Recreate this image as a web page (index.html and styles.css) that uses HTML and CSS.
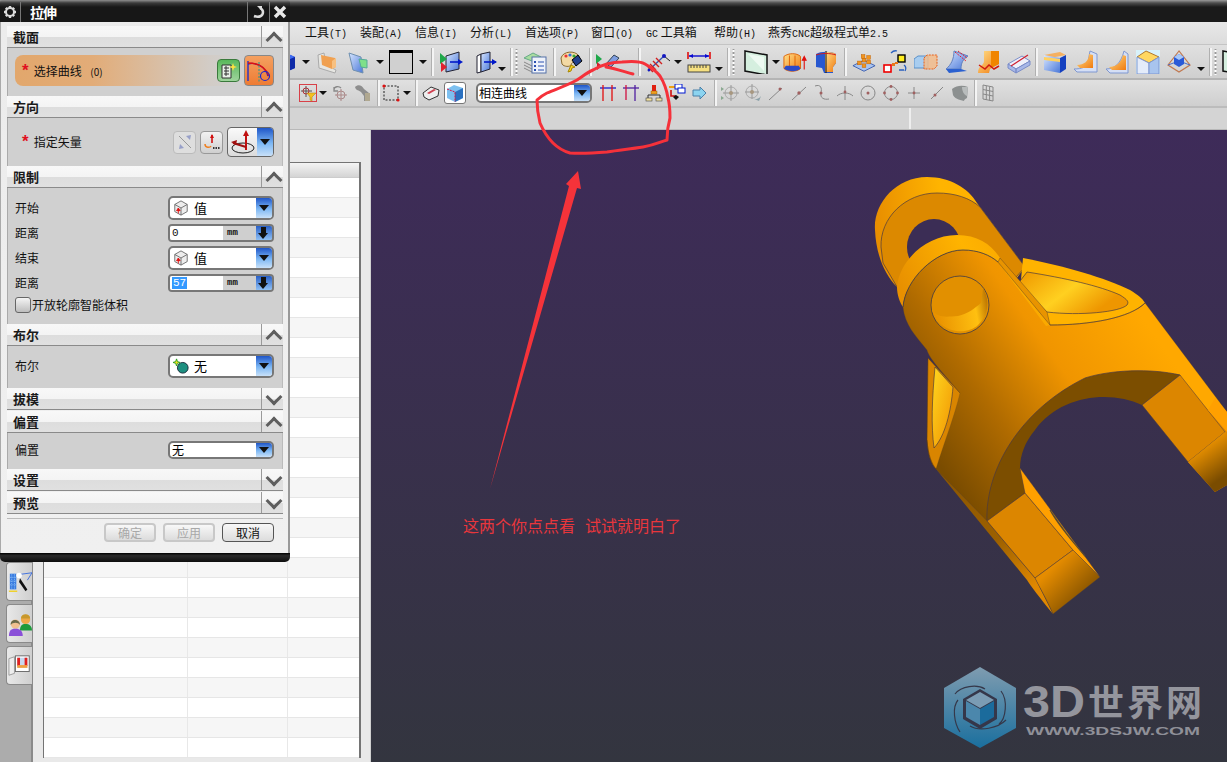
FILE: index.html
```html
<!DOCTYPE html>
<html lang="zh">
<head>
<meta charset="utf-8">
<title>拉伸</title>
<link rel="stylesheet" href="styles.css">
</head>
<body>
<svg class="sprite" width="0" height="0">
<defs>
<linearGradient id="gBlue" x1="0" y1="0" x2="1" y2="1"><stop offset="0" stop-color="#d8e6ff"/><stop offset="1" stop-color="#4a78d8"/></linearGradient>
<linearGradient id="gOr" x1="0" y1="0" x2="1" y2="1"><stop offset="0" stop-color="#ffe08a"/><stop offset="1" stop-color="#f07a10"/></linearGradient>
<symbol id="i-cube" viewBox="0 0 24 24"><path d="M3 7l9-4 9 4v11l-9 4-9-4z" fill="#1c3fd8"/><path d="M3 7l9-4 9 4-9 4z" fill="#3f6cf0"/><path d="M12 11v11l9-4V7z" fill="#0e2aa8"/></symbol>
<symbol id="i-boxo" viewBox="0 0 24 24"><path d="M3 5l6-2 2 12 10 5-1 3-16-5z" fill="#e6e6e2" stroke="#aaa"/><path d="M6 5l14 3 1 9-4 2-10-4z" fill="#f0a050"/><path d="M17 11l4-3v9l-4 2z" fill="#f7c080"/></symbol>
<symbol id="i-paneg" viewBox="0 0 24 24"><path d="M3 3l12 4 2 16-10-3z" fill="url(#gBlue)" stroke="#6e8fb0"/><path d="M13 9l8 1v8l-6-1z" fill="#7fe08a" stroke="#5a9"/></symbol>
<symbol id="i-frame" viewBox="0 0 24 24"><rect x="0.5" y="0.5" width="23" height="23" fill="#d0d0d0" stroke="#000"/><rect x="0" y="0" width="24" height="3" fill="#000"/></symbol>
<symbol id="i-af1" viewBox="0 0 24 24"><path d="M7 6l13-4v17l-13 3z" fill="url(#gBlue)" stroke="#223"/><path d="M1 3l7 6-7 5z" fill="#1fa84a"/><path d="M2 12l6 5-6 5z" fill="#e02030"/><path d="M11 12h11" stroke="#0018c8" stroke-width="1.6"/><path d="M19 9l5 3-5 3z" fill="#0018c8"/></symbol>
<symbol id="i-af2" viewBox="0 0 24 24"><path d="M3 6l4-2v18l-4 1z" fill="#fff" stroke="#223"/><path d="M7 4l9-2v17l-9 3z" fill="url(#gBlue)" stroke="#223"/><path d="M10 12h12" stroke="#0018c8" stroke-width="1.6"/><path d="M18 9l5 3-5 3z" fill="#0018c8"/></symbol>
<symbol id="i-list" viewBox="0 0 24 24"><path d="M1 8l9-5 8 4-9 4z" fill="#a9dca0" stroke="#6a8"/><path d="M1 12l8 4M1 15l8 4M1 18l8 4" stroke="#888" fill="none"/><rect x="9" y="7" width="14" height="16" fill="#eef2fa" stroke="#5570a8"/><path d="M11 11h2v2h-2zM11 15h2v2h-2zM11 19h2v2h-2z" fill="#2a50b0"/><path d="M15 12h6M15 16h6M15 20h6" stroke="#2a50b0"/></symbol>
<symbol id="i-pal" viewBox="0 0 24 24"><path d="M2 8c2-7 14-8 18-2 2 5-8 5-8 9-1 2-7 2-9-1z" fill="#f3d9a4" stroke="#8a6a30"/><circle cx="7" cy="6" r="1.6" fill="#e33"/><circle cx="11" cy="5" r="1.6" fill="#2c6de0"/><circle cx="15" cy="6" r="1.6" fill="#3a3"/><path d="M13 10l6-5 4 6-6 5z" fill="#20408c" stroke="#000"/><path d="M12 15l-3 7 3-1 1-3 3-1z" fill="#f5d020" stroke="#a80"/></symbol>
<symbol id="i-play" viewBox="0 0 30 24"><path d="M0 4l6 5-6 5z" fill="#1fa84a"/><path d="M1 12l5 4-5 4z" fill="#d02030"/><path d="M10 14l8-9 5 3-8 9z" fill="#7f9ee0" stroke="#345"/></symbol>
<symbol id="i-ant" viewBox="0 0 24 24"><path d="M2 21L18 6" stroke="#3050b0" stroke-width="1.2"/><path d="M18 6l6 5" stroke="#222"/><circle cx="18" cy="6" r="2" fill="#1418c0"/><path d="M4 14l6 6M7 11l6 6M10 8l6 6M2 17l5 5" stroke="#d02020" stroke-width="1.4"/><circle cx="3" cy="20" r="1.4" fill="#1418c0"/></symbol>
<symbol id="i-rule" viewBox="0 0 24 24"><path d="M1 2v7M23 2v7" stroke="#e01010" stroke-width="1.6"/><path d="M2 6h20" stroke="#0a0ad0" stroke-width="1.4"/><path d="M2 6l4-2v4zM22 6l-4-2v4z" fill="#0a0ad0"/><rect x="1" y="15" width="22" height="7" fill="#f6e080" stroke="#444"/><path d="M4 15v3M7 15v3M10 15v3M13 15v3M16 15v3M19 15v3" stroke="#444"/></symbol>
<symbol id="i-pane" viewBox="0 0 24 24"><path d="M1 1l22 4v20L1 21z" fill="#d5efdf" stroke="#111" stroke-width="1.5"/><path d="M4 4l16 3v14z" fill="#eefaf2"/></symbol>
<symbol id="i-exo" viewBox="0 0 26 24"><path d="M1 6c5-4 14-4 18 0v13c-4 4-14 4-18 0z" fill="url(#gOr)" stroke="#e06000"/><path d="M7 5v16M13 5v16" stroke="#e06000"/><path d="M1 19c5 4 14 4 18 0l-2-3H3z" fill="#2c4ac8"/><path d="M23 8v12M23 6l-2 4h4z" stroke="#e01010" fill="#e01010" stroke-width="1.2"/></symbol>
<symbol id="i-exb" viewBox="0 0 24 24"><path d="M2 4c5-3 15-3 20 0v9l-3 4v6H10l-2-5-6-1z" fill="#2858d0"/><path d="M11 2c4 0 8 0 11 2v9l-3 4v5h-8z" fill="url(#gOr)"/><path d="M12 1v22" stroke="#111"/><path d="M2 5c5-2 15-2 20 0" stroke="#d02020" fill="none"/></symbol>
<symbol id="i-pads" viewBox="0 0 26 24"><path d="M1 16l12-6 12 6-12 6z" fill="#aac4ee" stroke="#3a5db0"/><g fill="#f0941e" stroke="#c06000" stroke-width=".5"><rect x="6" y="11" width="4" height="4"/><rect x="11" y="8" width="4" height="4"/><rect x="16" y="10" width="4" height="4"/><rect x="11" y="14" width="4" height="4"/><rect x="16" y="5" width="4" height="4"/><rect x="10" y="4" width="4" height="4"/></g></symbol>
<symbol id="i-pts" viewBox="0 0 24 24"><rect x="15" y="5" width="7" height="7" fill="#ffee20" stroke="#000" stroke-width="1.4"/><rect x="1" y="15" width="7" height="7" fill="#fff" stroke="#e00" stroke-width="1.6"/><rect x="9" y="13" width="3" height="3" fill="#e8761a"/><rect x="12" y="12" width="3" height="2" fill="#e8761a"/><path d="M8 3q3-3 6-2M21 15q3 2 1 6M16 20h5" stroke="#2a60c0" fill="none" stroke-width="1.3"/></symbol>
<symbol id="i-boxes" viewBox="0 0 24 24"><path d="M0 9l4-3h10v12H0z" fill="#a8cdf0" stroke="#5a90c8"/><path d="M10 8l3-3h10v11l-3 3H10z" fill="#f2bc8c" fill-opacity=".85" stroke="#e8601a" stroke-dasharray="2 1"/></symbol>
<symbol id="i-sweep" viewBox="0 0 24 24"><path d="M9 1l14 5c-5 3-7 7-7 13L1 19c5-4 8-10 8-18z" fill="url(#gBlue)" stroke="#6080c0"/><path d="M10 2l11 9M13 1l9 7" stroke="#e02030" stroke-dasharray="2 1"/><path d="M1 19l15 0 6 2-18 2z" fill="#2a60d0"/></symbol>
<symbol id="i-fold" viewBox="0 0 24 24"><path d="M8 1h15v13l-9 5-1 4H2c0-8 6-7 6-12z" fill="url(#gOr)"/><path d="M15 1h8v13l-8 4z" fill="#f08500"/><path d="M3 15l6 4 4-4 5 4 5-3" stroke="#d01a10" stroke-width="1.5" fill="none"/></symbol>
<symbol id="i-slab" viewBox="0 0 24 24"><path d="M1 14l14-8 8 5-14 8z" fill="#eef0fa" stroke="#7a8cc8"/><path d="M1 14v4l8 5v-4zM9 19v4l14-8v-4z" fill="#a8b8e8" stroke="#7a8cc8"/><path d="M4 16L21 5" stroke="#d02030" stroke-width="1.2"/></symbol>
<symbol id="i-boxt" viewBox="0 0 24 24"><path d="M1 5l16-3 6 3-16 3z" fill="#f5b060"/><path d="M1 5l16 3v15L1 20z" fill="url(#gBlue)"/><path d="M1 7l16 2v3L1 10z" fill="#ffd060"/><path d="M17 8l6-3v14l-6 4z" fill="#1440c0"/></symbol>
<symbol id="i-bend1" viewBox="0 0 24 24"><path d="M16 1l7 3v18H3l-3-3c8 0 13-2 14-7z" fill="#d5dff5" stroke="#7f97d0"/><path d="M15 4l4 1v13H6l-3-3c7 0 12-4 12-11z" fill="url(#gOr)"/></symbol>
<symbol id="i-bend2" viewBox="0 0 24 24"><path d="M19 1l4 3v19H5l-4-4c9 0 15-6 18-18z" fill="#d5dff5" stroke="#7f97d0"/><path d="M18 5l3 1v14H7l-3-3c7 0 12-4 14-12z" fill="url(#gOr)"/></symbol>
<symbol id="i-box2" viewBox="0 0 24 24"><rect width="24" height="24" fill="#d8f2fa"/><path d="M1 7l9-6 13 6-10 6z" fill="#ffd860" stroke="#b07a30"/><path d="M2 9l11 5" stroke="#d06010" stroke-width="1.5"/><path d="M1 7l12 6v11H1z" fill="#e4ecfa" stroke="#7f97d0"/><path d="M13 13l10-6v17H13z" fill="#a8c4ee" stroke="#7f97d0"/></symbol>
<symbol id="i-cubep" viewBox="0 0 24 24"><path d="M12 1L1 15l11 7 11-7z" fill="none" stroke="#c07850" stroke-width="1.2"/><path d="M1 15l11-4 11 4" stroke="#4a6cc8" fill="none"/><path d="M7 7l5-3 5 3v7l-5 3-5-3z" fill="#2a5ad8"/><path d="M7 7l5-3 5 3-5 3z" fill="#a8c8f8"/></symbol>
<symbol id="i-filt" viewBox="0 0 18 18"><rect x=".5" y=".5" width="17" height="17" fill="none" stroke="#d84048"/><path d="M7 2v11M2 7h11" stroke="#555"/><circle cx="7" cy="7" r="3" fill="none" stroke="#b03038"/><path d="M8 9h9l-4 4v4l-2-1v-3z" fill="#f5c020" stroke="#a88010" stroke-width=".5"/></symbol>
<symbol id="i-tgt" viewBox="0 0 18 18"><circle cx="10" cy="11" r="4" fill="none" stroke="#a88"/><path d="M10 5v12M4 11h12" stroke="#a88"/><path d="M3 6c0-4 5-4 7-2M3 3v4h4" stroke="#888" fill="none" stroke-width="1.3"/></symbol>
<symbol id="i-pipe" viewBox="0 0 18 18"><path d="M1 3c3-3 7-2 9 2l5 4v8h-5v-5L7 8C5 6 2 7 1 3z" fill="#8e8e8e"/><rect x="11" y="9" width="5" height="8" fill="#b0a890"/></symbol>
<symbol id="i-dash" viewBox="0 0 18 18"><rect x="2" y="2" width="14" height="14" fill="none" stroke="#222" stroke-dasharray="2 1.5"/><circle cx="2" cy="2" r="1.6" fill="#e01010"/><circle cx="16" cy="16" r="1.6" fill="#e01010"/></symbol>
<symbol id="i-tbox" viewBox="0 0 18 18"><path d="M1 9l8-6 8 3-1 6-9 4-5-3z" fill="#eee" stroke="#333"/><path d="M5 9l7-4 2 1-7 4z" fill="#d04050"/></symbol>
<symbol id="i-acube" viewBox="0 0 18 18"><path d="M1 5l7-4 9 3v10l-8 4-8-4z" fill="#7cc0f0"/><path d="M9 8l8-4v10l-8 4z" fill="#2a70c0"/><path d="M1 5l8 3v10" fill="none" stroke="#e01040" stroke-dasharray="2 1"/></symbol>
<symbol id="i-t1" viewBox="0 0 18 18"><path d="M1 4h16" stroke="#1a1ad0" stroke-width="1.3"/><path d="M4 1v16M13 1v16" stroke="#e01010" stroke-width="1.3"/></symbol>
<symbol id="i-t2" viewBox="0 0 18 18"><path d="M1 4h16" stroke="#5020a0" stroke-width="1.3"/><path d="M4 1v15" stroke="#d01040" stroke-width="1.3"/><path d="M13 1v16" stroke="#5020a0" stroke-width="1.3"/></symbol>
<symbol id="i-org" viewBox="0 0 18 18"><rect x="7" y="1" width="4" height="6" fill="#e02010"/><rect x="6" y="7" width="6" height="3" fill="#f0a020" stroke="#805000" stroke-width=".4"/><path d="M3 14v-3h12v3" fill="none" stroke="#333"/><rect x="1" y="14" width="6" height="3" fill="#f0e0a0" stroke="#444" stroke-width=".6"/><rect x="11" y="14" width="6" height="3" fill="#f0e0a0" stroke="#444" stroke-width=".6"/></symbol>
<symbol id="i-flow" viewBox="0 0 18 18"><path d="M1 3h6" stroke="#f0a010" stroke-width="2"/><rect x="7" y="0" width="7" height="5" fill="#fff" stroke="#0018d0"/><rect x="10" y="4" width="7" height="5" fill="#fff" stroke="#0018d0"/><path d="M3 6v6h5" stroke="#d01010" stroke-width="1.6" fill="none"/><path d="M5 13l3-2 3 2-3 3z" fill="#111"/></symbol>
<symbol id="i-next" viewBox="0 0 18 18"><path d="M2 6h7V3l6 6-6 6v-3H2z" fill="#8cd4f0" stroke="#4a80a8"/></symbol>
<symbol id="i-g1" viewBox="0 0 18 18"><circle cx="10" cy="9" r="6" fill="none" stroke="#aaa"/><path d="M10 1v16M2 9h16" stroke="#999"/><circle cx="10" cy="9" r="2" fill="#a89880"/><path d="M0 3l3 2-3 2zM0 12l3 2-3 2z" fill="#8aa890"/></symbol>
<symbol id="i-g2" viewBox="0 0 18 18"><circle cx="8" cy="8" r="6" fill="none" stroke="#aaa"/><path d="M8 0v15M1 8h14" stroke="#999"/><circle cx="8" cy="8" r="2" fill="#a89880"/><path d="M8 14q6 3 9-2l-2 5z" fill="#8aa0a8"/></symbol>
<symbol id="i-g3" viewBox="0 0 18 18"><path d="M2 16L15 4" stroke="#888"/><circle cx="13" cy="5" r="1.5" fill="#a06060"/></symbol>
<symbol id="i-g4" viewBox="0 0 18 18"><path d="M2 16L16 3" stroke="#888"/><circle cx="9" cy="9" r="1.7" fill="#a06060"/></symbol>
<symbol id="i-g5" viewBox="0 0 18 18"><path d="M2 2c6-2 7 2 6 7-1 5 3 7 8 6" stroke="#888" fill="none"/><circle cx="8" cy="9" r="1.5" fill="#a06060"/></symbol>
<symbol id="i-g6" viewBox="0 0 18 18"><path d="M1 12c4-4 12-4 16 0M9 2v14" stroke="#888" fill="none"/><circle cx="9" cy="8" r="1.4" fill="#a06060"/></symbol>
<symbol id="i-g7" viewBox="0 0 18 18"><circle cx="9" cy="9" r="7" stroke="#888" fill="none"/><circle cx="9" cy="9" r="1.5" fill="#a06060"/></symbol>
<symbol id="i-g8" viewBox="0 0 18 18"><circle cx="9" cy="9" r="6.5" stroke="#888" fill="none"/><g fill="#a06060"><circle cx="9" cy="2.5" r="1.4"/><circle cx="9" cy="15.5" r="1.4"/><circle cx="2.5" cy="9" r="1.4"/><circle cx="15.5" cy="9" r="1.4"/></g></symbol>
<symbol id="i-g9" viewBox="0 0 18 18"><path d="M9 3v12M3 9h12" stroke="#888"/><circle cx="9" cy="9" r="1.4" fill="#a06060"/></symbol>
<symbol id="i-g10" viewBox="0 0 18 18"><path d="M3 15L15 3" stroke="#888"/><circle cx="7" cy="11" r="1.5" fill="#a06060"/></symbol>
<symbol id="i-g11" viewBox="0 0 18 18"><path d="M1 5c5-4 11-4 16-2l-1 11c-2 1-3 2-3 3-5-1-10-3-11-6z" fill="#8c9090"/><path d="M11 3l6 0-1 9c-3-1-5-5-5-9z" fill="#b8bcbc"/></symbol>
<symbol id="i-grid" viewBox="0 0 18 18"><path d="M4 1l10 2v14L4 15zM4 5.500l10 2M4 10l10 2M7.300 2v14M10.600 2.500v14" fill="none" stroke="#888"/></symbol>
<symbol id="i-cubesm" viewBox="0 0 18 18"><path d="M2 5l7-4 7 4v8l-7 4-7-4z" fill="#ececec" stroke="#666"/><path d="M2 5l7 4 7-4M9 9v8" stroke="#666" fill="none"/><path d="M6 15v-5M6 9l-2 3h4z" stroke="#e01010" fill="#e01010"/></symbol>
</defs>
</svg>

<div class="app">
  <div class="titlebar"></div>
  <nav class="menubar">
    <span class="menu m-tools">工具<i>(T)</i></span>
    <span class="menu">装配<i>(A)</i></span>
    <span class="menu">信息<i>(I)</i></span>
    <span class="menu">分析<i>(L)</i></span>
    <span class="menu">首选项<i>(P)</i></span>
    <span class="menu">窗口<i>(O)</i></span>
    <span class="menu"><i>GC</i> 工具箱</span>
    <span class="menu">帮助<i>(H)</i></span>
    <span class="menu">燕秀<i>CNC</i>超级程式单<i>2.5</i></span>
  </nav>
  <div class="toolbar t1">
    <span class="s"><svg><use href="#i-cube"/></svg></span><b class="c"></b>
    <span class="s"><svg><use href="#i-boxo"/></svg></span>
    <span class="s"><svg><use href="#i-paneg"/></svg></span><b class="c g2"></b>
    <span class="s"><svg><use href="#i-frame"/></svg></span><b class="c g2"></b><u class="sep"></u>
    <span class="s"><svg><use href="#i-af1"/></svg></span>
    <span class="s g4"><svg><use href="#i-af2"/></svg></span><b class="c n4 low"></b><u class="sep"></u><em class="grip"></em>
    <span class="s"><svg><use href="#i-list"/></svg></span><u class="sep"></u>
    <span class="s n2"><svg><use href="#i-pal"/></svg></span><u class="sep"></u>
    <span class="s g2"><svg class="wide"><use href="#i-play"/></svg></span><u class="sep g9"></u>
    <span class="s"><svg><use href="#i-ant"/></svg></span><b class="c"></b>
    <span class="s"><svg><use href="#i-rule"/></svg></span><b class="c low"></b><u class="sep"></u><em class="grip"></em>
    <span class="s g4"><svg><use href="#i-pane"/></svg></span><b class="c"></b>
    <span class="s n2"><svg><use href="#i-exo"/></svg></span>
    <span class="s"><svg><use href="#i-exb"/></svg></span><u class="sep"></u>
    <span class="s"><svg><use href="#i-pads"/></svg></span>
    <span class="s"><svg><use href="#i-pts"/></svg></span>
    <span class="s"><svg><use href="#i-boxes"/></svg></span>
    <span class="s"><svg><use href="#i-sweep"/></svg></span>
    <span class="s"><svg><use href="#i-fold"/></svg></span>
    <span class="s"><svg><use href="#i-slab"/></svg></span><u class="sep n2"></u>
    <span class="s"><svg><use href="#i-boxt"/></svg></span>
    <span class="s"><svg><use href="#i-bend1"/></svg></span>
    <span class="s"><svg><use href="#i-bend2"/></svg></span>
    <span class="s"><svg><use href="#i-box2"/></svg></span>
    <span class="s"><svg><use href="#i-cubep"/></svg></span><b class="c g2 low"></b><u class="sep"></u><em class="grip"></em>
    <span class="s"><svg><use href="#i-pane"/></svg></span>
  </div>
  <div class="toolbar t2">
    <span class="s2 lead"><svg><use href="#i-filt"/></svg></span><b class="c n1"></b>
    <span class="s2"><svg><use href="#i-tgt"/></svg></span>
    <span class="s2"><svg><use href="#i-pipe"/></svg></span><u class="sep"></u>
    <span class="s2 n2"><svg><use href="#i-dash"/></svg></span><b class="c"></b><u class="sep"></u>
    <span class="s2"><svg><use href="#i-tbox"/></svg></span>
    <span class="s2 active"><svg><use href="#i-acube"/></svg></span>
    <div class="combo tcombo"><span class="ctext">相连曲线</span><span class="cbtn"></span></div>
    <span class="s2 g4"><svg><use href="#i-t1"/></svg></span>
    <span class="s2"><svg><use href="#i-t2"/></svg></span>
    <span class="s2"><svg><use href="#i-org"/></svg></span>
    <span class="s2"><svg><use href="#i-flow"/></svg></span>
    <span class="s2"><svg><use href="#i-next"/></svg></span><u class="sep"></u>
    <span class="s2"><svg><use href="#i-g1"/></svg></span>
    <span class="s2"><svg><use href="#i-g2"/></svg></span>
    <span class="s2"><svg><use href="#i-g3"/></svg></span>
    <span class="s2"><svg><use href="#i-g4"/></svg></span>
    <span class="s2"><svg><use href="#i-g5"/></svg></span>
    <span class="s2"><svg><use href="#i-g6"/></svg></span>
    <span class="s2"><svg><use href="#i-g7"/></svg></span>
    <span class="s2"><svg><use href="#i-g8"/></svg></span>
    <span class="s2"><svg><use href="#i-g9"/></svg></span>
    <span class="s2"><svg><use href="#i-g10"/></svg></span>
    <span class="s2"><svg><use href="#i-g11"/></svg></span><u class="sep"></u>
    <span class="s2 n2"><svg><use href="#i-grid"/></svg></span>
  </div>
  <div class="statusbar"><div class="st-left"></div><div class="st-right"></div></div>
  <div class="work">
    <aside class="rail">
      <div class="tab tab1"><svg viewBox="0 0 26 26"><path d="M2 4h7v17H2z" fill="#3a7ce0"/><path d="M4 4v17M7 4v17M2 8h7M2 12h7M2 16h7" stroke="#8cc0f8" stroke-dasharray="1 1"/><path d="M1 23h9" stroke="#f0d020" stroke-width="1.500"/><path d="M11 5l15-2-5 8" fill="none" stroke="#3a6ce0"/><path d="M13 9l8 12-2 2-7-10z" fill="#111"/><circle cx="12" cy="6" r="3" fill="#fff"/></svg></div>
      <div class="tab tab2"><svg viewBox="0 0 26 26"><path d="M13 20c0-5 2-7 6-7s7 2 7 7z" fill="#1e9a3c"/><circle cx="19" cy="8" r="5" fill="#eea848"/><path d="M14 7c0-6 10-6 10 0z" fill="#c8982c"/><path d="M1 26c0-6 3-8 7-8s8 2 8 8z" fill="#8a50d8"/><circle cx="8" cy="13" r="5" fill="#f0c090"/><path d="M3 14c-1-7 10-7 10 0-2-3-8-3-10 0z" fill="#6a6a4a"/></svg></div>
      <div class="tab tab3"><svg viewBox="0 0 26 26"><path d="M1 5l6-2v18l-6 2z" fill="#eee" stroke="#999"/><rect x="8" y="2" width="15" height="17" fill="#fff" stroke="#666"/><rect x="10" y="4" width="11" height="11" fill="#c8d8f0"/><path d="M10 4h3v9h-3zM18 4h3v9h-3z" fill="#e02020"/><path d="M10 12h11v3H10z" fill="#f0a040"/></svg></div>
    </aside>
    <section class="panel">
      <div class="grid-wrap">
        <div class="grid-head"></div>
        <div class="grid-rows">
          <div class="r"><span></span><span></span><span></span></div>
          <div class="r"><span></span><span></span><span></span></div>
          <div class="r"><span></span><span></span><span></span></div>
          <div class="r"><span></span><span></span><span></span></div>
          <div class="r"><span></span><span></span><span></span></div>
          <div class="r"><span></span><span></span><span></span></div>
          <div class="r"><span></span><span></span><span></span></div>
          <div class="r"><span></span><span></span><span></span></div>
          <div class="r"><span></span><span></span><span></span></div>
          <div class="r"><span></span><span></span><span></span></div>
          <div class="r"><span></span><span></span><span></span></div>
          <div class="r"><span></span><span></span><span></span></div>
          <div class="r"><span></span><span></span><span></span></div>
          <div class="r"><span></span><span></span><span></span></div>
          <div class="r"><span></span><span></span><span></span></div>
          <div class="r"><span></span><span></span><span></span></div>
          <div class="r"><span></span><span></span><span></span></div>
          <div class="r"><span></span><span></span><span></span></div>
          <div class="r"><span></span><span></span><span></span></div>
          <div class="r"><span></span><span></span><span></span></div>
          <div class="r"><span></span><span></span><span></span></div>
          <div class="r"><span></span><span></span><span></span></div>
          <div class="r"><span></span><span></span><span></span></div>
          <div class="r"><span></span><span></span><span></span></div>
          <div class="r"><span></span><span></span><span></span></div>
          <div class="r"><span></span><span></span><span></span></div>
          <div class="r"><span></span><span></span><span></span></div>
          <div class="r"><span></span><span></span><span></span></div>
          <div class="r"><span></span><span></span><span></span></div>
        </div>
      </div>
    </section>
    <main class="viewport">
      <svg class="model" viewBox="371 130 856 632" width="856" height="632">
        <defs>
          <linearGradient id="vbg" x1="0" y1="0" x2="0" y2="1"><stop offset="0" stop-color="#3e2b59"/><stop offset="1" stop-color="#33353f"/></linearGradient>
          <linearGradient id="earB" x1="0" y1="0.3" x2="1" y2="0.2"><stop offset="0" stop-color="#e88e00"/><stop offset="0.45" stop-color="#ffb400"/><stop offset="1" stop-color="#ffae00"/></linearGradient>
          <linearGradient id="earF" x1="0" y1="0.5" x2="1" y2="0.2"><stop offset="0" stop-color="#e89000"/><stop offset="0.5" stop-color="#ffb400"/><stop offset="1" stop-color="#f5a000"/></linearGradient>
          <linearGradient id="body" gradientUnits="userSpaceOnUse" x1="925" y1="445" x2="1130" y2="300"><stop offset="0" stop-color="#7a4c00"/><stop offset="0.3" stop-color="#b06b00"/><stop offset="0.62" stop-color="#f09500"/><stop offset="1" stop-color="#ffa800"/></linearGradient>
          <linearGradient id="pocket" gradientUnits="userSpaceOnUse" x1="1040" y1="260" x2="1085" y2="320"><stop offset="0" stop-color="#f09a00"/><stop offset="0.55" stop-color="#ffd020"/><stop offset="1" stop-color="#ee9600"/></linearGradient>
          <linearGradient id="holeIn" gradientUnits="userSpaceOnUse" x1="935" y1="320" x2="990" y2="310"><stop offset="0" stop-color="#e89000"/><stop offset="0.75" stop-color="#ffc010"/><stop offset="1" stop-color="#b87000"/></linearGradient>
          <linearGradient id="ringIn" x1="0" y1="0" x2="1" y2="1"><stop offset="0" stop-color="#ffd820"/><stop offset="1" stop-color="#f09000"/></linearGradient>
          <linearGradient id="foot" gradientUnits="userSpaceOnUse" x1="1050" y1="570" x2="1085" y2="605"><stop offset="0" stop-color="#e58c00"/><stop offset="1" stop-color="#7a4c00"/></linearGradient>
          <linearGradient id="foot2" gradientUnits="userSpaceOnUse" x1="1205" y1="445" x2="1226" y2="475"><stop offset="0" stop-color="#e89000"/><stop offset="1" stop-color="#7a4c00"/></linearGradient>
          <linearGradient id="left" gradientUnits="userSpaceOnUse" x1="940" y1="470" x2="1030" y2="590"><stop offset="0" stop-color="#8a5500"/><stop offset="0.6" stop-color="#9c6000"/><stop offset="1" stop-color="#e08800"/></linearGradient>
          <linearGradient id="hexT" x1="0" y1="0" x2="0" y2="1"><stop offset="0" stop-color="#7f9cb0"/><stop offset="1" stop-color="#1a6f9e"/></linearGradient>
        </defs>
        <rect x="371" y="130" width="856" height="632" fill="url(#vbg)"/>

        <!-- far ring -->
        <path d="M928 358L927 440C928 455 931 464 936 469L990 440L962 395Z" fill="#d98500" stroke="#5a3a10" stroke-width=".5"/>
        <path d="M935 367C932 400 931 425 934 448C945 436 951 412 953 387Z" fill="url(#ringIn)" stroke="#3a3040" stroke-width=".6"/>

        <!-- back ear -->
        <path d="M875 230C873 205 895 177 927 177C950 177 968 188 977 203L1025 267L1000 300L897 287C885 275 876 255 875 230Z" fill="url(#earB)"/>
        <path d="M881 247C880 218 905 193 937 193C955 193 970 198 980 207L1025 267L1000 295L900 292L883 263Z" fill="#dc8900" stroke="#4a3a40" stroke-width=".7"/>
        <ellipse cx="934" cy="247" rx="27" ry="28" fill="#3b2d55"/>

        <!-- pocket rim -->
        <path d="M1023 258C1065 266 1105 278 1130 290C1138 295 1142 298 1145 303L1110 330L1050 330L1020 290Z" fill="#ffb300"/>
        <path d="M1027 272C1065 278 1100 286 1120 295C1128 300 1129 302 1127 305C1120 312 1080 316 1047 312L1017 285Z" fill="url(#pocket)" stroke="#4a3a40" stroke-width=".7"/>

        <!-- main body -->
        <path d="M903 307C905 280 935 250 963 250C978 250 990 255 998 262L1050 325C1090 325 1130 318 1145 303L1227 412V480L1180 375C1150 370 1110 370 1085 380C1060 390 1000 440 987 521L936 469C945 440 955 415 960 393C945 375 930 360 927 350C915 335 905 325 903 307Z" fill="url(#body)" stroke="#6a4a20" stroke-width=".3"/>
        <!-- front ear top band -->
        <path d="M897 287C899 262 925 235 957 235C978 235 992 245 1000 258L1050 325L1046 326L998 262C990 255 978 250 963 250C935 250 905 280 903 307C900 303 897 295 897 287Z" fill="url(#earF)"/>
        <path d="M1000 258L1047 312L1050 325L998 262Z" fill="#e89400" stroke="#6a4a20" stroke-width=".5"/>
        <path d="M1050 325C1090 325 1130 318 1145 303" fill="none" stroke="#4a3a40" stroke-width=".7"/>
        <path d="M903 307C905 280 935 250 963 250C978 250 990 255 998 262" fill="none" stroke="#3e3a48" stroke-width=".8"/>
        <!-- hole -->
        <circle cx="960" cy="305" r="29" fill="#e29000" stroke="#3e3a48" stroke-width=".8"/>
        <path d="M932 310C938 318 945 317 958 316C968 314 975 308 981 303L983 288C990 300 989 315 978 325C968 335 940 335 932 310Z" fill="url(#holeIn)"/>

        <!-- dark arch -->
        <path d="M987 521C985 470 1020 410 1085 378C1110 370 1150 368 1180 375L1142 405C1110 390 1060 395 1035 430C1025 442 1020 455 1020 468L1025 493Z" fill="#7c4e00"/>
        <path d="M987 521C985 470 1020 410 1085 378C1110 370 1150 368 1180 375" fill="none" stroke="#4a3a40" stroke-width=".7"/>

        <!-- left side lower -->
        <path d="M936 469L987 521L1035 578L1053 614C1040 598 1030 585 1027 580Z" fill="url(#left)"/>
        <!-- left leg end -->
        <path d="M1025 493L987 521L1035 578L1073 550Z" fill="#dc8600" stroke="#4a3a40" stroke-width=".6"/>
        <path d="M1035 578L1073 550L1100 577L1053 614C1047 600 1040 588 1035 578Z" fill="url(#foot)" stroke="#4a3a40" stroke-width=".4"/>
        <path d="M1020 468L1100 577L1073 550L1025 493Z" fill="#ffa000" stroke="#4a3a40" stroke-width=".4"/>
        <path d="M1050 510C1060 525 1075 545 1085 556C1078 548 1058 525 1050 510Z" fill="#ffd020" stroke="#5a4a30" stroke-width="1.200"/>

        <!-- right leg -->
        <path d="M1180 375L1208 410L1227 430V485L1215 492L1188 462L1142 405Z" fill="#dc8600"/>
        <path d="M1180 375L1142 405L1188 462L1225 432" fill="none" stroke="#4a3a40" stroke-width=".6"/>
        <path d="M1188 462L1215 492L1227 485V434L1225 432Z" fill="url(#foot2)"/>
        <path d="M1180 375L1225 432" stroke="#4a3a40" stroke-width=".5" fill="none"/>
        <path d="M1208 410L1227 432V412L1215 398Z" fill="#ffa000"/>
        <path d="M936 469C932 464 928 455 927 440" fill="none" stroke="#5a3a10" stroke-width=".4"/>

        <!-- watermark -->
        <g class="logo">
          <path d="M980 667L1016 688V728L980 748L944 728V688Z" fill="url(#hexT)"/>
          <path d="M955 694c6-8 22-10 30 -5M1001 691c7 9 5 28-2 33M1006 720c-8 8-26 12-36 6M960 732c-6-9-8-25-2-32" fill="none" stroke="#35384a" stroke-width="1.200"/>
          <path d="M980 689L997 699V719L980 729L963 719V699Z" fill="#35374a"/>
          <path d="M980 692L994 700L980 708L966 700Z" fill="#7b9cb4"/>
          <path d="M966 701L980 709V725L966 717Z" fill="#4b87ac"/>
          <path d="M994 701L980 709V725L994 717Z" fill="#1b6b9c"/>
          <text x="1023" y="717" class="wm-a" textLength="62" lengthAdjust="spacingAndGlyphs">3D</text>
          <text x="1088" y="716" class="wm-b" textLength="114" lengthAdjust="spacing">世界网</text>
          <text x="1026" y="735" class="wm-c" textLength="174" lengthAdjust="spacingAndGlyphs">WWW.3DSJW.COM</text>
        </g>
      </svg>
    </main>
  </div>
</div>

<div class="dialog">
  <header class="dlg-title">
    <span class="dlg-gear"><svg viewBox="0 0 16 16" width="16" height="16"><path d="M8 2v2M8 12v2M2 8h2M12 8h2M3.800 3.800l1.400 1.400M10.800 10.800l1.400 1.400M3.800 12.200l1.400-1.400M10.800 5.200l1.400-1.400" stroke="#ddd" stroke-width="2.400"/><circle cx="8" cy="8" r="4" fill="none" stroke="#ddd" stroke-width="2"/></svg></span>
    <span class="dlg-name">拉伸</span>
    <span class="dlg-btn"><svg viewBox="0 0 16 16" width="16" height="16"><path d="M3 12c5 2 9 0 9-4 0-2-1-3-3-4" fill="none" stroke="#ddd" stroke-width="2.500"/><path d="M6 2l5-0v5z" fill="#ddd"/></svg></span>
    <span class="dlg-btn dlg-close"><svg viewBox="0 0 16 16" width="16" height="16"><path d="M3 3l10 10M13 3L3 13" stroke="#e8e8e8" stroke-width="3.400"/></svg></span>
  </header>
  <div class="dlg-body">
    <section class="sec">
      <h3 class="head"><span>截面</span><b class="chev up"></b></h3>
      <div class="content b48">
        <div class="selbar">
          <span class="star">*</span><span class="sb-text">选择曲线 <i>(0)</i></span>
          <span class="btn22 green"><svg viewBox="0 0 18 18" width="18" height="18"><path d="M2 3h9v13H2z" fill="#e8f0e8" stroke="#333"/><path d="M4 6h5M4 9h5M4 12h5M6 4v10" stroke="#333"/><path d="M13 1l1 3 3 1-3 1-1 3-1-3-3-1 3-1z" fill="#ffe040"/></svg></span>
          <span class="btn30 orange"><svg viewBox="0 0 26 26" width="26" height="26"><path d="M2 3v20M2 6c8-2 17 2 20 12" stroke="#1828d0" stroke-width="1.300" fill="none"/><path d="M2 5c9 0 17 3 21 13" stroke="#e01010" stroke-width="1.300" fill="none"/><path d="M13 4v20" stroke="#1a9a9a" stroke-dasharray="2 1.500"/><circle cx="19" cy="18" r="4.500" fill="none" stroke="#1828d0" stroke-width="1.200"/></svg></span>
        </div>
      </div>
    </section>
    <section class="sec">
      <h3 class="head"><span>方向</span><b class="chev up"></b></h3>
      <div class="content b48 dirrow">
        <span class="star">*</span><span class="lbl grow">指定矢量</span>
        <span class="btn22 dim"><svg viewBox="0 0 18 18" width="18" height="18"><path d="M3 3l12 12" stroke="#999"/><path d="M15 2l-5 1 4 4zM3 16l5-1-4-4z" fill="#98a0c8"/></svg></span>
        <span class="btn22"><svg viewBox="0 0 18 18" width="18" height="18"><path d="M9 2v8" stroke="#d01010" stroke-width="1.600"/><path d="M9 1l-2 4h4z" fill="#d01010"/><path d="M2 11c0 4 5 4 6 2" fill="none" stroke="#f08020" stroke-width="1.500"/><path d="M10 15h1.500M12.500 15h1.500M15 15h1.500" stroke="#000" stroke-width="1.600"/></svg></span>
        <span class="vec"><span class="vec-ic"><svg viewBox="0 0 28 26" width="28" height="26"><ellipse cx="14" cy="19" rx="11" ry="5" fill="none" stroke="#222"/><path d="M17 4v17" stroke="#c01010" stroke-width="2"/><path d="M17 1l-3 6h6z" fill="#c01010"/><path d="M17 18L4 14" stroke="#a01010" stroke-width="2"/><path d="M2 13l6-2-1 5z" fill="#a01010"/></svg></span><span class="cbtn"></span></span>
      </div>
    </section>
    <section class="sec">
      <h3 class="head"><span>限制</span><b class="chev up"></b></h3>
      <div class="content limits">
        <div class="row"><span class="lbl">开始</span><div class="combo"><svg class="cic"><use href="#i-cubesm"/></svg><span class="ctext">值</span><span class="cbtn"></span></div></div>
        <div class="row"><span class="lbl">距离</span><div class="num"><span class="ntext">0</span><span class="unit">mm</span><span class="nbtn"></span></div></div>
        <div class="row"><span class="lbl">结束</span><div class="combo"><svg class="cic"><use href="#i-cubesm"/></svg><span class="ctext">值</span><span class="cbtn"></span></div></div>
        <div class="row"><span class="lbl">距离</span><div class="num"><span class="ntext"><mark>57</mark></span><span class="unit">mm</span><span class="nbtn"></span></div></div>
        <label class="chk"><span class="box"></span>开放轮廓智能体积</label>
      </div>
    </section>
    <section class="sec">
      <h3 class="head"><span>布尔</span><b class="chev up"></b></h3>
      <div class="content b42">
        <div class="row"><span class="lbl">布尔</span><div class="combo"><svg class="cic" viewBox="0 0 18 18"><circle cx="11" cy="11" r="6" fill="#1d8f80" stroke="#123"/><path d="M4 1l1 3 3 1-3 1-1 3-1-3-3-1 3-1z" fill="#f0e020" stroke="#292"/></svg><span class="ctext">无</span><span class="cbtn"></span></div></div>
      </div>
    </section>
    <section class="sec gap1">
      <h3 class="head"><span>拔模</span><b class="chev down"></b></h3>
    </section>
    <section class="sec">
      <h3 class="head"><span>偏置</span><b class="chev up"></b></h3>
      <div class="content b36">
        <div class="row"><span class="lbl">偏置</span><div class="combo short"><span class="ctext flush">无</span><span class="cbtn"></span></div></div>
      </div>
    </section>
    <section class="sec gap1">
      <h3 class="head"><span>设置</span><b class="chev down"></b></h3>
    </section>
    <section class="sec">
      <h3 class="head"><span>预览</span><b class="chev down"></b></h3>
    </section>
    <footer class="dlg-foot">
      <button class="push off">确定</button>
      <button class="push off">应用</button>
      <button class="push">取消</button>
    </footer>
  </div>
  <div class="dlg-bottom"></div>
</div>

<svg class="marks" viewBox="0 0 1227 762" width="1227" height="762">
  <path d="M633 74C625 72 617 69 606 67M593 70C603 64 612 62 622 62C632 61 640 61 645 64C652 68 657 72 660 76C665 84 667 92 668 98C670 105 670 112 670 118C668 125 667 130 667 140C660 142 655 145 643 147C630 149 620 150 607 152C595 153 582 154 570 153C563 151 558 148 553 143C547 137 543 130 540 123C538 115 537 108 537 100C540 97 543 95 547 93C556 89 566 86 577 80C583 76 588 72 593 70" fill="none" stroke="#f5313a" stroke-width="3" stroke-linecap="round" stroke-linejoin="round"/>
  <path d="M490 489L569 186L566 184L578 171L581 189L577 188Z" fill="#f5333a"/>
</svg>
<p class="note"><span>这两个你点点看</span><span>试试就明白了</span></p>
</body>
</html>
```
FILE: styles.css
```css
* { box-sizing: border-box; }
html, body { margin: 0; padding: 0; }
body {
  position: relative;
  width: 1227px;
  height: 762px;
  overflow: hidden;
  font-family: "Noto Sans CJK SC", "Liberation Sans", sans-serif;
  font-size: 12px;
  color: #111;
  background: #d8d8d8;
}
.sprite { position: absolute; }
.app { display: flex; flex-direction: column; width: 1227px; height: 762px; }

.titlebar { height: 22px; flex: none; background: linear-gradient(#9a9a9a 0, #4c4c4c 3px, #1a1a1a 7px, #1a1a1a 100%); }

.menubar {
  height: 23px; flex: none;
  display: flex; align-items: center;
  padding-left: 305px;
  background: linear-gradient(#e8e8e8, #dcdcdc);
  border-bottom: 1px solid #c4c4c4;
}
.menu { line-height: 20px; margin-right: 10px; white-space: nowrap; }
.menu i { font-style: normal; font-family: "Liberation Mono", monospace; font-size: 10px; }
.menu:nth-child(1) { width: 45px; }
.menu:nth-child(2) { width: 45px; }
.menu:nth-child(3) { width: 45px; }
.menu:nth-child(4) { width: 45px; }
.menu:nth-child(5) { width: 56px; }
.menu:nth-child(6) { width: 45px; }
.menu:nth-child(7) { width: 58px; }
.menu:nth-child(8) { width: 44px; }

.toolbar { display: flex; align-items: center; flex: none; overflow: hidden; background: linear-gradient(#e0e0e0, #cfcfcf); }
.t1 { height: 35px; padding-left: 270px; border-bottom: 2px solid #b4b4b4; }
.t2 { height: 28px; padding-left: 296px; border-bottom: 2px solid #bcbcbc; }
.s { width: 31px; height: 26px; flex: none; display: flex; align-items: center; justify-content: center; }
.s svg { width: 24px; height: 24px; }
.s svg.wide { width: 30px; }
.s2 { width: 23px; height: 22px; flex: none; display: flex; align-items: center; justify-content: center; }
.s2 svg { width: 18px; height: 18px; }
.lead { margin-right: 0; }
.active { width: 22px; height: 22px; background: #fff; border: 1px solid #777; border-radius: 3px; margin: 0 4px 0 2px; }
.c { width: 10px; height: 10px; flex: none; position: relative; }
.c::after { content: ""; position: absolute; left: 1px; top: 3px; border: 4px solid transparent; border-top: 4px solid #111; border-bottom: 0; }
.low::after { top: 10px; }
.sep { width: 7px; height: 28px; flex: none; text-decoration: none; position: relative; }
.sep::after { content: ""; position: absolute; left: 3px; top: 0; bottom: 0; width: 2px; background: #f4f4f4; border-left: 1px solid #b0b0b0; }
.grip { width: 5px; height: 26px; flex: none; background: radial-gradient(circle, #fff 1px, #999 1.5px, transparent 2px) 0 0 / 5px 4px; }
.g2 { margin-left: 2px; }
.g4 { margin-left: 4px; }
.g9 { margin-left: 9px; }
.n1 { margin-left: -1px; }
.n2 { margin-left: -2px; }
.c.n4 { margin-left: -4px; }

.combo {
  width: 106px; height: 24px; flex: none;
  display: flex; align-items: center;
  background: #fff;
  border: 2px solid #777;
  border-radius: 5px;
  overflow: hidden;
}
.tcombo { width: 116px; height: 20px; margin-left: 6px; }
.short { height: 18px; }
.ctext { flex: 1; padding-left: 2px; line-height: 16px; font-size: 13px; color: #000; }
.tcombo .ctext { padding-left: 1px; font-size: 12px; }
.ctext.flush { padding-left: 2px; font-size: 12px; }
.cic { width: 16px; height: 16px; margin-left: 3px; margin-right: 3px; flex: none; }
.cbtn {
  width: 16px; align-self: stretch; flex: none; position: relative;
  background: linear-gradient(#1f56c8, #7db8f4 55%, #c8e0f8);
}
.cbtn::after { content: ""; position: absolute; left: 3px; top: 50%; margin-top: -3px; border: 5px solid transparent; border-top: 6px solid #111; border-bottom: 0; }

.statusbar { height: 22px; flex: none; display: flex; background: #d4d4d4; border-bottom: 1px solid #b8b8b8; }
.st-left { width: 911px; border-right: 2px solid #eee; }
.st-right { flex: 1; }

.work { flex: 1; display: flex; min-height: 0; }
.rail { width: 33px; flex: none; background: #acacac; border-right: 2px solid #8a8a8a; position: relative; display: flex; flex-direction: column; gap: 3px; padding: 432px 0 0 6px; }
.tab { width: 26px; height: 39px; background: linear-gradient(90deg, #e8e8e8, #cfcfcf); border: 1px solid #8a8a8a; border-right: 0; border-radius: 4px 0 0 4px; display: flex; align-items: center; justify-content: center; }
.tab svg { width: 24px; height: 26px; }
.panel { width: 338px; flex: none; background: #e9e9e9; padding: 32px 9px 0 10px; border-right: 1px solid #d0d0d0; overflow: hidden; }
.grid-wrap { width: 318px; background: #fff; border: solid #747474; border-width: 1px 2px 0 1px; }
.grid-head { height: 15px; background: linear-gradient(#f4f4f4, #d4d4d4); border-bottom: 1px solid #ccc; }
.r { display: grid; grid-template-columns: 144px 100px 1fr; height: 20px; border-bottom: 1px solid #e6e6e6; }
.r span { border-right: 1px solid #e8e8e8; }
.r span:last-child { border-right: 0; }
.r:nth-child(even) { background: #f6f6f6; }

.viewport { flex: 1; min-width: 0; background: linear-gradient(#3e2b59, #33353f); overflow: hidden; }
.model { display: block; }
.wm-a { font: bold 44px "Liberation Sans", sans-serif; fill: #94959d; }
.wm-b { font: bold 36px "Noto Sans CJK SC", sans-serif; fill: #94959d; }
.wm-c { font: bold 11px "Liberation Sans", sans-serif; fill: #8f9098; }

/* Floating dialog */
.dialog {
  position: absolute; left: 0; top: 0;
  width: 290px; height: 562px;
  display: flex; flex-direction: column;
}
.dlg-title {
  height: 22px; flex: none;
  display: flex; align-items: center;
  background: linear-gradient(#8e8e8e 0, #3a3a3a 3px, #171717 7px, #171717 100%);
  border-radius: 3px 3px 0 0;
  color: #fff;
  padding-top: 2px;
}
.dlg-gear { width: 21px; height: 20px; display: flex; align-items: center; justify-content: center; border-right: 1px solid #777; flex: none; }
.dlg-name { flex: 1; padding-left: 9px; font-size: 14px; font-weight: 700; letter-spacing: -1px; }
.dlg-btn { width: 22px; height: 20px; display: flex; align-items: center; justify-content: center; border-left: 1px solid #777; flex: none; }
.dlg-close { width: 21px; }
.dlg-body {
  flex: 1; min-height: 0;
  padding: 4px 5px 0 6px;
  background: linear-gradient(#ececec, #f0f0f0);
  border-left: 1px solid #aaa; border-right: 2px solid #999;
  display: flex; flex-direction: column;
}
.sec { flex: none; }
.gap1 { margin-bottom: 1px; }
.head {
  margin: 0; height: 22px;
  display: flex; align-items: center; justify-content: space-between;
  background: linear-gradient(#f8f8f8 0, #f4f4f4 50%, #dddddd 52%, #e0e0e0 100%);
  border-bottom: 1px solid #8a8a8a;
  font-size: 13px; font-weight: 700; color: #1a1a1a;
  padding-left: 6px;
}
.chev { width: 22px; height: 21px; flex: none; border-left: 1px solid #9a9a9a; position: relative; }
.chev::before {
  content: ""; position: absolute; left: 6px; width: 9px; height: 9px;
  border: solid #5e5e5e; border-width: 3px 0 0 3px;
}
.chev.up::before { top: 8px; transform: rotate(45deg); }
.chev.down::before { top: 3px; transform: rotate(225deg); }
.content { background: #d0d0d0; border-left: 1px solid #aaa; border-right: 1px solid #bbb; }
.b48 { height: 48px; padding: 7px 8px 0 7px; }
.b42 { height: 42px; padding: 8px 8px 0 7px; }
.b36 { height: 36px; padding: 8px 8px 0 7px; }
.selbar {
  height: 31px; display: flex; align-items: center; gap: 4px;
  border-radius: 8px;
  padding-left: 7px; 
  background: linear-gradient(90deg, #e2a76c 0, #e2ac78 30%, #d2ccc6 75%, #d0d0d0 85%);
}
.star { color: #e01020; font: bold 17px "Liberation Sans", sans-serif; line-height: 12px; height: 12px; margin-right: 1px; }
.sb-text { flex: 1; }
.sb-text i { font-style: normal; font-size: 10px; margin-left: 6px; }
.btn22 { width: 23px; height: 23px; flex: none; display: flex; align-items: center; justify-content: center; border: 1px solid #999; border-radius: 4px; background: linear-gradient(#f2f2f2, #cfcfcf); }
.btn22.green { background: linear-gradient(#58b85a, #9ed49c); border-color: #3a7a3c; }
.btn22.dim { background: #dedede; border-color: #bbb; }
.btn30 { width: 30px; height: 31px; flex: none; display: flex; align-items: center; justify-content: center; border: 1px solid #888; border-radius: 4px; background: linear-gradient(#f4a060, #ee7c34); }
.dirrow { display: flex; align-items: center; gap: 4px; padding: 0 8px 0 14px; }
.grow { flex: 1; }
.lbl { line-height: 18px; }
.vec { width: 47px; height: 30px; flex: none; display: flex; border: 1px solid #666; border-radius: 4px; overflow: hidden; background: linear-gradient(#fafafa, #dcdcdc); }
.vec-ic { flex: 1; display: flex; align-items: center; justify-content: center; }
.limits { height: 136px; display: flex; flex-direction: column; gap: 4px; padding: 8px 8px 0 7px; }
.row { display: flex; align-items: center; justify-content: space-between; }
.num { width: 106px; height: 18px; display: flex; align-items: stretch; border: 2px solid #777; border-radius: 4px; overflow: hidden; }
.ntext { width: 53px; background: #fff; font: 11px/14px "Liberation Mono", monospace; padding-left: 2px; flex: none; }
.ntext mark { background: #3399ff; color: #fff; padding: 0 1px; }
.unit { flex: 1; background: #cfcfcf; font: bold 9px/15px "Liberation Mono", monospace; padding-left: 4px; }
.nbtn { width: 16px; flex: none; position: relative; background: linear-gradient(#2860c8, #8fc0f4); }
.nbtn::before { content: ""; position: absolute; left: 5px; top: 1px; width: 5px; height: 6px; background: #111; }
.nbtn::after { content: ""; position: absolute; left: 2px; top: 7px; border: 5.5px solid transparent; border-top: 6px solid #111; border-bottom: 0; }
.chk { display: flex; align-items: center; gap: 1px; height: 16px; margin-top: 1px; line-height: 16px; }
.box { width: 16px; height: 16px; border: 1px solid #666; border-radius: 3px; background: linear-gradient(#f4f4f4, #bdbdbd); flex: none; }

.dlg-foot {
  margin-top: 4px; padding-top: 4px; height: 28px;
  display: flex; justify-content: flex-end; gap: 7px;
  padding-right: 9px;
  border-top: 1px solid #bbb;
}
.push {
  width: 52px; height: 19px; padding: 0;
  font: 12px/15px "Noto Sans CJK SC", sans-serif; color: #111;
  border: 1px solid #555; border-radius: 4px;
  background: linear-gradient(#f8f8f8, #dcdcdc);
}
.push.off { color: #a8a8a8; border: 2px solid #c8c8c8; }
.dlg-bottom { height: 9px; flex: none; background: linear-gradient(#000 0, #2a2a2a 30%, #0e0e0e 100%); border-radius: 0 0 5px 5px; }

/* Hand-drawn annotations lying over the window */
.marks { position: absolute; left: 0; top: 0; pointer-events: none; }
.note {
  position: absolute; left: 463px; top: 513px; margin: 0;
  display: flex; gap: 10px;
  font-size: 16px; line-height: 24px; color: #e8363c; white-space: nowrap;
}
```
